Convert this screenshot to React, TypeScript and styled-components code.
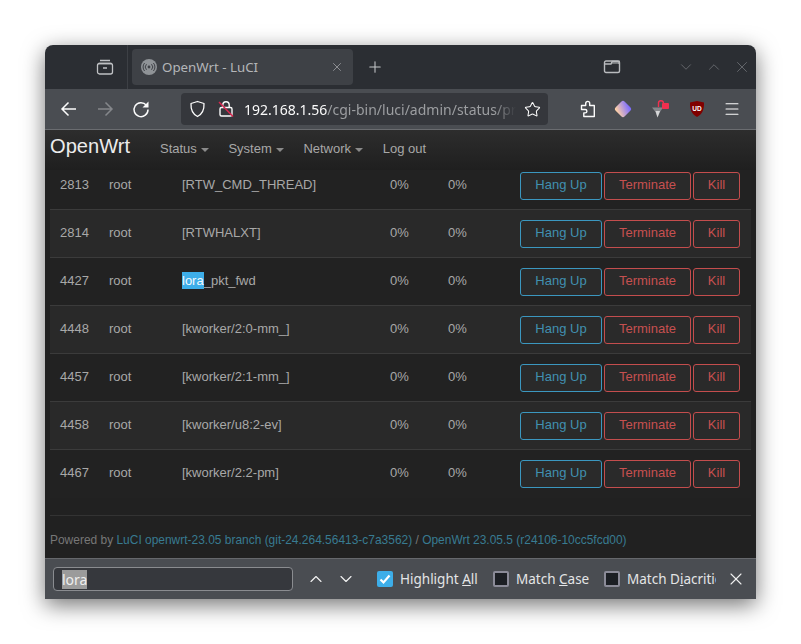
import { ChevronDown, ChevronUp, Menu, Plus, Star, X } from 'lucide-react'
import styled, { createGlobalStyle } from 'styled-components'

const GlobalStyle = createGlobalStyle`
  html, body {
    margin: 0;
    padding: 0;
    background: #fff;
  }
  * {
    box-sizing: border-box;
  }
`

const Page = styled.div`
  width: 801px;
  height: 644px;
  padding: 45px;
  overflow: hidden;
`

const Window = styled.div`
  width: 711px;
  height: 554px;
  display: flex;
  flex-direction: column;
  border-radius: 8px 8px 0 0;
  overflow: hidden;
  box-shadow: 0 6px 22px rgba(0, 0, 0, 0.55);
  font-family: 'Noto Sans', sans-serif;
`

const TabBar = styled.div`
  height: 44px;
  flex: none;
  display: flex;
  align-items: center;
  background: #2b2e33;
  color: #bfc1c4;
`

const SideSlot = styled.div`
  width: 83px;
  height: 44px;
  flex: none;
  display: flex;
  align-items: center;
  justify-content: flex-end;
  padding-right: 13px;
  border-right: 1px solid #3d4045;
`

const Tab = styled.div`
  width: 221px;
  height: 36px;
  margin-left: 4px;
  flex: none;
  display: flex;
  align-items: center;
  padding: 0 9px;
  background: #3e4146;
  border-radius: 4px;
  font-size: 13.3px;
  color: #b4b6b9;
`

const TabTitle = styled.span`
  margin-left: 5px;
  flex: 1;
`

const NewTab = styled.div`
  width: 44px;
  display: flex;
  justify-content: center;
  color: #c5c7ca;
`

const TabSpacer = styled.div`
  flex: 1;
`

const WindowControls = styled.div`
  display: flex;
  align-items: center;
  gap: 10px;
  padding-right: 5px;
  color: #6e7176;
`

const ListAll = styled.div`
  display: flex;
  margin-right: 56px;
  color: #b9bbbe;
`

const Toolbar = styled.div`
  height: 41px;
  flex: none;
  display: flex;
  align-items: center;
  background: #4a4d52;
  border-bottom: 1px solid #6a6c70;
  color: #fbfbfb;
`

const NavButtons = styled.div`
  width: 136px;
  flex: none;
  display: flex;
  align-items: center;
  padding-left: 14px;
  gap: 16px;
`

const UrlBar = styled.div`
  width: 367px;
  height: 32px;
  flex: none;
  display: flex;
  align-items: center;
  padding: 0 7px 0 8px;
  background: #35373c;
  border-radius: 4px;
`

const UrlText = styled.div`
  width: 272px;
  margin-left: 10px;
  overflow: hidden;
  white-space: nowrap;
  font-size: 14px;
  color: #fbfbfb;
  mask-image: linear-gradient(to right, #000 92%, transparent 100%);
`

const UrlPath = styled.span`
  color: #9c9ea1;
`

const ExtIcons = styled.div`
  flex: 1;
  display: flex;
  align-items: center;
  justify-content: space-between;
  padding: 0 15px 0 32px;
`

const Content = styled.div`
  flex: 1;
  min-height: 0;
  background: #212121;
  display: flex;
  flex-direction: column;
  font-family: 'Liberation Sans', Arial, sans-serif;
  font-size: 13px;
  color: #a8a8a8;
`

const NavBar = styled.div`
  height: 40px;
  flex: none;
  display: flex;
  align-items: center;
  padding: 0 5px;
  background: linear-gradient(to bottom, #2d2d2d, #1f1f1f);
  position: relative;
  z-index: 1;
`

const Brand = styled.div`
  width: 110px;
  font-size: 20.1px;
  margin-top: -7px;
  color: #ececec;
`

const NavItem = styled.div`
  margin-right: 19.6px;
  margin-top: -3px;
  color: #a8a8a8;
  display: flex;
  align-items: center;
  gap: 4px;
`

const Caret = styled.span`
  width: 0;
  height: 0;
  margin-top: 2px;
  border-top: 4px solid #8a8a8a;
  border-left: 4px solid transparent;
  border-right: 4px solid transparent;
`

const Table = styled.div`
  margin: -8px 5px 0;
  flex: none;
`

const Row = styled.div<{ $odd: boolean }>`
  height: 48px;
  display: grid;
  grid-template-columns: 49px 73px 208px 58px 72px auto;
  align-items: center;
  padding-left: 10px;
  border-bottom: 1px solid #3b3b3b;
  background: ${(p) => (p.$odd ? '#292929' : '#222222')};
  &:last-child {
    border-bottom-color: transparent;
  }
`

const Cell = styled.span`
  padding-bottom: 2px;
`

const Actions = styled.div`
  display: flex;
  gap: 2px;
`

const ActionButton = styled.div<{ $tone: 'blue' | 'red'; $w: number }>`
  width: ${(p) => p.$w}px;
  height: 28px;
  display: flex;
  align-items: center;
  justify-content: center;
  border-radius: 3px;
  border: 1px solid ${(p) => (p.$tone === 'blue' ? '#3b97bf' : '#c44d4d')};
  color: ${(p) => (p.$tone === 'blue' ? '#4190b0' : '#c65050')};
  background: #2a2a2a;
  padding-bottom: 3px;
`

const Mark = styled.span`
  background: #3daee9;
  color: #f4f9fc;
  padding: 1px 0;
`

const Rule = styled.div`
  height: 1px;
  margin: 17px 5px 0;
  flex: none;
  background: #333;
`

const Footer = styled.div`
  margin: 17px 5px 0;
  font-size: 11.96px;
  color: #777;
`

const FootLink = styled.span`
  color: #387b91;
`

const FindBar = styled.div`
  height: 41px;
  flex: none;
  display: flex;
  align-items: center;
  padding: 0 0 0 8px;
  background: #4a4d52;
  border-top: 1px solid #66686c;
  font-size: 13.5px;
  color: #e4e5e6;
`

const FindInput = styled.div`
  width: 240px;
  height: 24px;
  flex: none;
  display: flex;
  align-items: center;
  padding: 0 8px;
  background: #36383d;
  border: 1px solid #8a8c90;
  border-radius: 4px;
  font-size: 14px;
`

const FindSel = styled.span`
  background: #9b9b9b;
  color: #eee;
  line-height: 19px;
`

const FindArrows = styled.div`
  width: 84px;
  flex: none;
  display: flex;
  padding-left: 13px;
  gap: 10px;
  color: #f0f0f0;
`

const Check = styled.div<{ $on?: boolean }>`
  width: 16px;
  height: 16px;
  flex: none;
  display: flex;
  align-items: center;
  justify-content: center;
  border-radius: 2px;
  background: ${(p) => (p.$on ? '#3daee9' : '#1c1f24')};
  border: ${(p) => (p.$on ? 'none' : '2px solid #8b8b98')};
`

const FindLabel = styled.div<{ $w: number }>`
  width: ${(p) => p.$w}px;
  margin-left: 7px;
  flex: none;
  white-space: nowrap;
  overflow: hidden;
`

const AccessKey = styled.span`
  text-decoration: underline;
`

const FindClose = styled.div`
  margin-left: 10px;
  display: flex;
  color: #f0f0f0;
`

const rows: [string, string, React.ReactNode][] = [
  ['2813', 'root', '[RTW_CMD_THREAD]'],
  ['2814', 'root', '[RTWHALXT]'],
  ['4427', 'root', <><Mark>lora</Mark>_pkt_fwd</>],
  ['4448', 'root', '[kworker/2:0-mm_]'],
  ['4457', 'root', '[kworker/2:1-mm_]'],
  ['4458', 'root', '[kworker/u8:2-ev]'],
  ['4467', 'root', '[kworker/2:2-pm]'],
]

export default function App() {
  return (
    <Page>
      <GlobalStyle />
      <Window>
        <TabBar>
          <SideSlot>
            <svg width="18" height="18" viewBox="0 0 18 18" fill="none" stroke="currentColor" strokeWidth="1.3">
              <path d="M4 2.500h10M2.500 5.500h13" />
              <rect x="1.500" y="5.500" width="15" height="10.500" rx="2" />
              <path d="M7 10h4" />
            </svg>
          </SideSlot>
          <Tab>
            <svg width="16" height="16" viewBox="0 0 16 16" fill="none">
              <circle cx="8" cy="8" r="8" fill="#8f9397" />
              <circle cx="8" cy="8" r="1.400" fill="#3e4146" />
              <path d="M5.500 5.200a4 4 0 0 0 0 5.600M10.500 5.200a4 4 0 0 1 0 5.600M3.600 4a6 6 0 0 0 0 8M12.400 4a6 6 0 0 1 0 8" stroke="#3e4146" strokeWidth="1" />
            </svg>
            <TabTitle>OpenWrt - LuCI</TabTitle>
            <X size={14} strokeWidth={1.3} color="#a5a7aa" />
          </Tab>
          <NewTab>
            <Plus size={18} strokeWidth={1.4} />
          </NewTab>
          <TabSpacer />
          <ListAll>
            <svg width="18" height="14" viewBox="0 0 18 14" fill="none" stroke="currentColor" strokeWidth="1.4">
              <rect x="1.500" y="1" width="15" height="11.500" rx="1.500" />
              <path d="M1.500 4h6.500l1.200-2.500h7v2.500" fill="currentColor" fillOpacity="0.5" />
            </svg>
          </ListAll>
          <WindowControls>
            <ChevronDown size={18} strokeWidth={1.1} />
            <ChevronUp size={18} strokeWidth={1.1} />
            <X size={18} strokeWidth={1.1} />
          </WindowControls>
        </TabBar>
        <Toolbar>
          <NavButtons>
            <svg width="20" height="20" viewBox="0 0 20 20" fill="none" stroke="currentColor" strokeWidth="1.500">
              <path d="M17 10H3.500M9.500 3.500L3 10l6.500 6.500" />
            </svg>
            <svg width="20" height="20" viewBox="0 0 20 20" fill="none" stroke="#85878b" strokeWidth="1.500">
              <path d="M3 10h13.500M10.500 3.500L17 10l-6.500 6.500" />
            </svg>
            <svg width="20" height="20" viewBox="0 0 20 20" fill="none">
              <path d="M15.400 6.200A7 7 0 1 0 17 10.500" stroke="currentColor" strokeWidth="1.500" />
              <path d="M17.500 2.500v6h-6z" fill="currentColor" />
            </svg>
          </NavButtons>
          <UrlBar>
            <svg width="17" height="18" viewBox="0 0 17 18" fill="none" stroke="currentColor" strokeWidth="1.300">
              <path d="M8.500 1.500L2 3.500c-.3 6 1.500 10.500 6.500 13 5-2.500 6.800-7 6.500-13z" strokeLinejoin="round" />
            </svg>
            <svg style={{ marginLeft: 12 }} width="16" height="18" viewBox="0 0 16 18" fill="none">
              <rect x="2" y="7.500" width="12" height="8.500" rx="1.500" stroke="#fbfbfb" strokeWidth="1.400" />
              <path d="M4.800 7.500V5a3.200 3.200 0 0 1 6.400 0v2.500" stroke="#fbfbfb" strokeWidth="1.400" />
              <path d="M1 2l14 14.500" stroke="#d8274f" strokeWidth="1.500" />
            </svg>
            <UrlText>
              192.168.1.56<UrlPath>/cgi-bin/luci/admin/status/processes</UrlPath>
            </UrlText>
            <Star size={17} strokeWidth={1.5} style={{ marginLeft: 'auto' }} />
          </UrlBar>
          <ExtIcons>
            <svg width="16" height="18" viewBox="0 0 16 18" fill="none" stroke="#fbfbfb" strokeWidth="1.400" strokeLinejoin="round">
              <path d="M1.500 5.500h4.200V3.400a2 2 0 0 1 4 0v2.100h4.600v11H3.800v-3.600h1.400a1.700 1.700 0 0 0 0-3.400H1.500z" />
            </svg>
            <svg width="18" height="18" viewBox="0 0 18 18">
              <defs>
                <linearGradient id="gem" x1="0.700" y1="0" x2="0.300" y2="1">
                  <stop offset="0" stopColor="#7c6cff" />
                  <stop offset="1" stopColor="#ffd1a6" />
                </linearGradient>
              </defs>
              <rect x="2.600" y="2.600" width="12.800" height="12.800" rx="2.500" fill="url(#gem)" transform="rotate(45 9 9)" />
            </svg>
            <svg width="20" height="20" viewBox="0 0 20 20" fill="none">
              <path d="M1 8.500h11L9 13l-2.500 5.500L4.500 13z" fill="#85878b" />
              <path d="M4.500 12h4.500l-2.500 6.500z" fill="#d5d6d8" />
              <rect x="11" y="4" width="7" height="6" rx="1" fill="#f0304f" />
              <path d="M7.500 8V4.500a2.500 2.500 0 0 1 5-.5" stroke="#f0304f" strokeWidth="1.400" />
            </svg>
            <svg width="16" height="18" viewBox="0 0 16 18">
              <path d="M1 2.500L8 1l7 1.500c.2 7-1.500 11.500-7 14.500C2.500 14 .8 9.500 1 2.500z" fill="#800000" />
              <text x="8" y="10.500" textAnchor="middle" fontSize="6.500" fontWeight="700" fill="#fff" fontFamily="Liberation Sans, sans-serif">UD</text>
            </svg>
            <Menu size={18} strokeWidth={1.4} />
          </ExtIcons>
        </Toolbar>
        <Content>
          <NavBar>
            <Brand>OpenWrt</Brand>
            <NavItem>Status <Caret /></NavItem>
            <NavItem>System <Caret /></NavItem>
            <NavItem>Network <Caret /></NavItem>
            <NavItem>Log out</NavItem>
          </NavBar>
          <Table>
            {rows.map(([pid, user, cmd], i) => (
              <Row key={pid} $odd={i % 2 === 1}>
                <Cell>{pid}</Cell>
                <Cell>{user}</Cell>
                <Cell>{cmd}</Cell>
                <Cell>0%</Cell>
                <Cell>0%</Cell>
                <Actions>
                  <ActionButton $tone="blue" $w={82}>Hang Up</ActionButton>
                  <ActionButton $tone="red" $w={87}>Terminate</ActionButton>
                  <ActionButton $tone="red" $w={47}>Kill</ActionButton>
                </Actions>
              </Row>
            ))}
          </Table>
          <Rule />
          <Footer>
            Powered by <FootLink>LuCI openwrt-23.05 branch (git-24.264.56413-c7a3562)</FootLink> / <FootLink>OpenWrt 23.05.5 (r24106-10cc5fcd00)</FootLink>
          </Footer>
        </Content>
        <FindBar>
          <FindInput>
            <FindSel>lora</FindSel>
          </FindInput>
          <FindArrows>
            <ChevronUp size={20} strokeWidth={1.4} />
            <ChevronDown size={20} strokeWidth={1.4} />
          </FindArrows>
          <Check $on>
            <svg width="12" height="12" viewBox="0 0 12 12" fill="none" stroke="#fff" strokeWidth="2.200">
              <path d="M1.500 6.500l3 3 6-7" />
            </svg>
          </Check>
          <FindLabel $w={93}>Highlight <AccessKey>A</AccessKey>ll</FindLabel>
          <Check />
          <FindLabel $w={88}>Match <AccessKey>C</AccessKey>ase</FindLabel>
          <Check />
          <FindLabel $w={89}>Match D<AccessKey>i</AccessKey>acritics</FindLabel>
          <FindClose>
            <X size={20} strokeWidth={1.3} />
          </FindClose>
        </FindBar>
      </Window>
    </Page>
  )
}
